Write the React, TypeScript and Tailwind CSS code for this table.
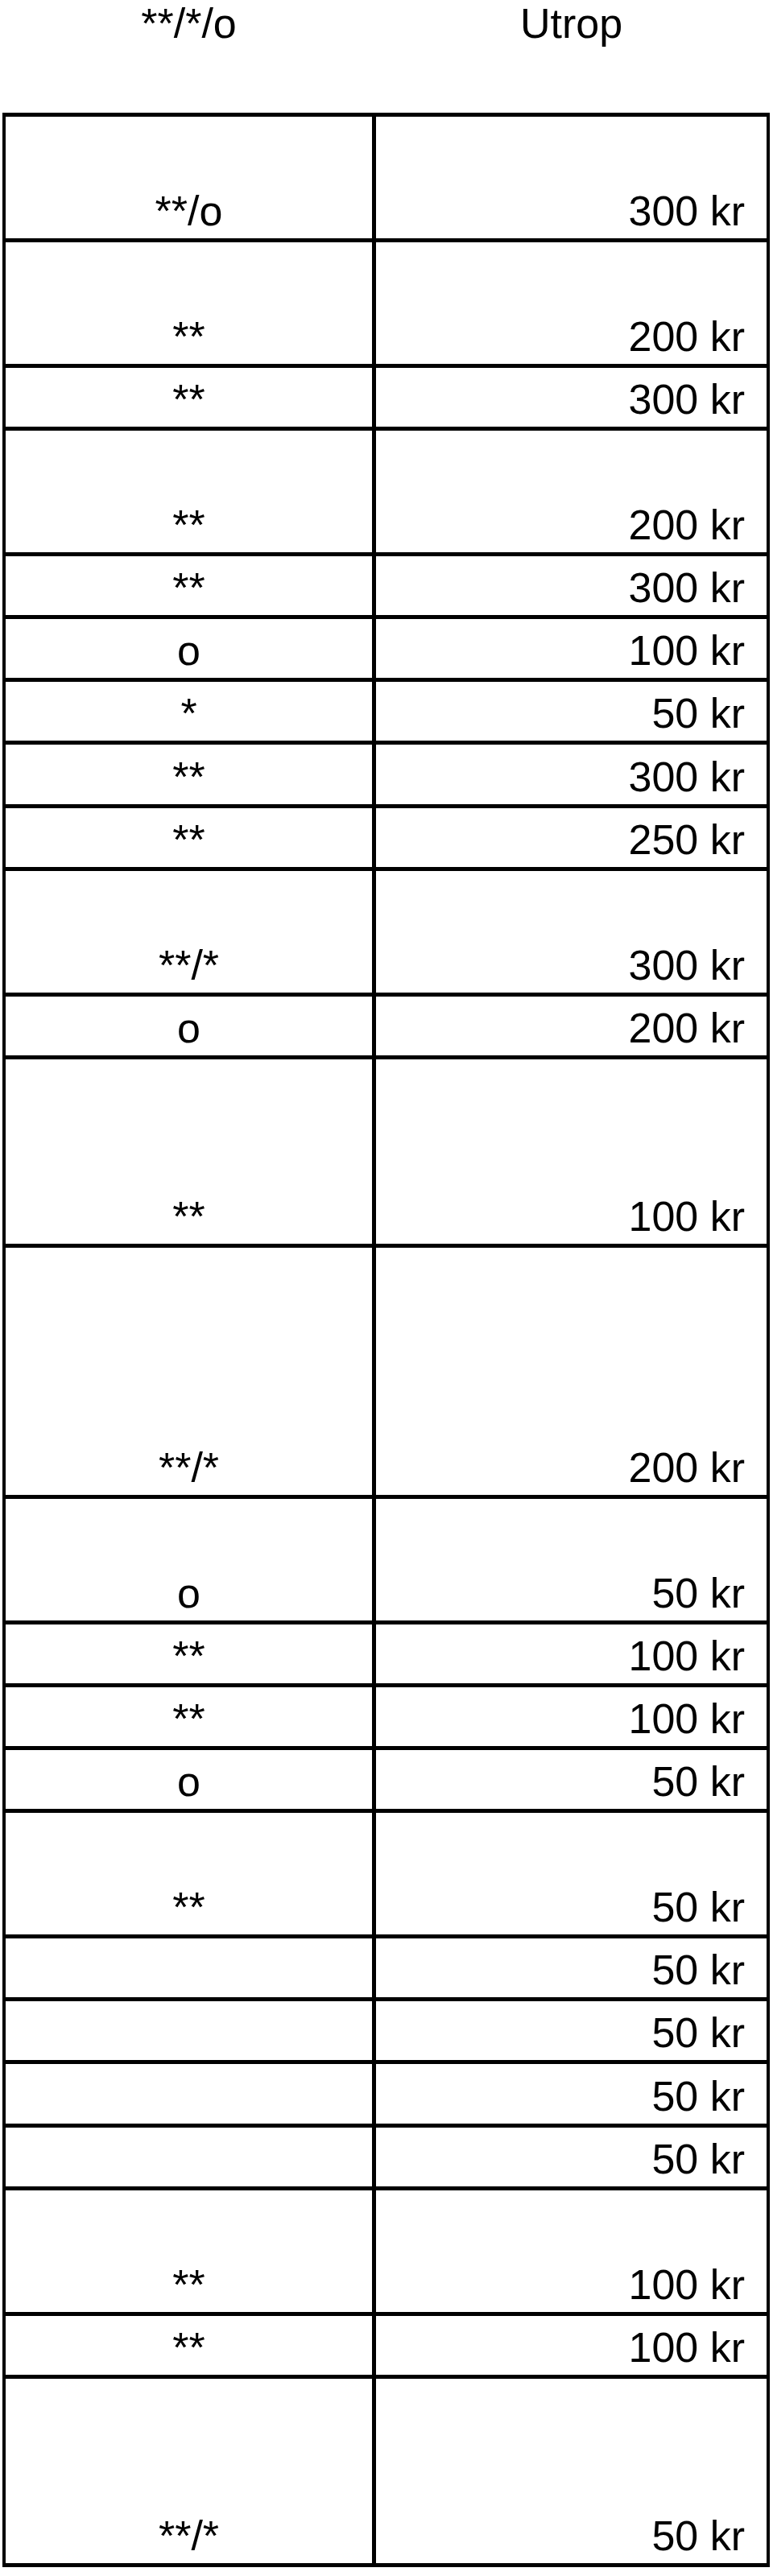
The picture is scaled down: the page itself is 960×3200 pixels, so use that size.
import React from "react";

type Row = { left: string; right: string; n: 1 | 2 | 3 | 4 };

const rows: Row[] = [
  { left: "**/o", right: "300 kr", n: 2 },
  { left: "**", right: "200 kr", n: 2 },
  { left: "**", right: "300 kr", n: 1 },
  { left: "**", right: "200 kr", n: 2 },
  { left: "**", right: "300 kr", n: 1 },
  { left: "o", right: "100 kr", n: 1 },
  { left: "*", right: "50 kr", n: 1 },
  { left: "**", right: "300 kr", n: 1 },
  { left: "**", right: "250 kr", n: 1 },
  { left: "**/*", right: "300 kr", n: 2 },
  { left: "o", right: "200 kr", n: 1 },
  { left: "**", right: "100 kr", n: 3 },
  { left: "**/*", right: "200 kr", n: 4 },
  { left: "o", right: "50 kr", n: 2 },
  { left: "**", right: "100 kr", n: 1 },
  { left: "**", right: "100 kr", n: 1 },
  { left: "o", right: "50 kr", n: 1 },
  { left: "**", right: "50 kr", n: 2 },
  { left: "", right: "50 kr", n: 1 },
  { left: "", right: "50 kr", n: 1 },
  { left: "", right: "50 kr", n: 1 },
  { left: "", right: "50 kr", n: 1 },
  { left: "**", right: "100 kr", n: 2 },
  { left: "**", right: "100 kr", n: 1 },
  { left: "**/*", right: "50 kr", n: 3 },
];

const heights: Record<number, string> = {
  1: "h-[73.05px]",
  2: "h-[151.1px]",
  3: "h-[229.15px]",
  4: "h-[307.2px]",
};

export default function App() {
  return (
    <div
      className="w-[960px] bg-white text-black text-[52px] leading-[60px]"
      style={{ fontFamily: '"Liberation Sans", Arial, Helvetica, sans-serif' }}
    >
      <div className="flex h-[140px] pl-[7px] pr-[8px]">
        <div className="w-[455px] flex justify-center -mt-[1px]">**/*/o</div>
        <div className="w-[5px]" />
        <div className="flex-1 flex justify-center -mt-[1px]">Utrop</div>
      </div>
      <div className="ml-[3px] w-[953px] border-l-4 border-r-4 border-t-[5px] border-black">
        {rows.map((r, i) => (
          <div key={i} className="flex border-b-[5px] border-black">
            <div
              className={`w-[460px] shrink-0 border-r-[5px] border-black flex items-end justify-center pb-[4px] ${heights[r.n]}`}
            >
              {r.left}
            </div>
            <div
              className={`flex-1 flex items-end justify-end pr-[27px] pb-[4px] ${heights[r.n]}`}
            >
              {r.right}
            </div>
          </div>
        ))}
      </div>
    </div>
  );
}
